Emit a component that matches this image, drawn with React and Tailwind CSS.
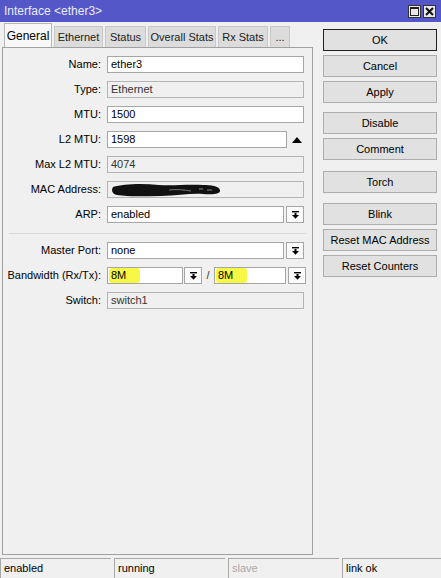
import React from "react";

const tabs = [
  { label: "General", w: "w-[48px]", active: true },
  { label: "Ethernet", w: "w-[49px]" },
  { label: "Status", w: "w-[41px]" },
  { label: "Overall Stats", w: "w-[68px]" },
  { label: "Rx Stats", w: "w-[50px]" },
  { label: "...", w: "w-[20px]" },
];

// right-hand command buttons; mt is the gap above each one
const buttons = [
  { label: "OK", mt: "mt-0", def: true },
  { label: "Cancel", mt: "mt-[4px]" },
  { label: "Apply", mt: "mt-[4px]" },
  { label: "Disable", mt: "mt-[9px]" },
  { label: "Comment", mt: "mt-[4px]" },
  { label: "Torch", mt: "mt-[11px]" },
  { label: "Blink", mt: "mt-[10px]" },
  { label: "Reset MAC Address", mt: "mt-[4px]" },
  { label: "Reset Counters", mt: "mt-[4px]" },
];

function DropGlyph() {
  return (
    <svg width="9" height="8" viewBox="0 0 9 8">
      <rect x="1" y="0" width="7" height="1.4" fill="#000" />
      <rect x="3.5" y="2" width="2" height="2" fill="#000" />
      <path d="M1 4 L8 4 L4.5 7.8 Z" fill="#000" />
    </svg>
  );
}

function DropButton() {
  return (
    <div className="w-[18px] h-[17px] border border-[#a6a6a6] bg-[#fbfbfb] flex items-center justify-center shrink-0">
      <DropGlyph />
    </div>
  );
}

function Field({ value, readOnly, className = "w-[197px]", children }) {
  return (
    <div
      className={`${className} h-[17px] border flex items-center pl-[3px] shrink-0 ${
        readOnly ? "border-[#b4b4b4] bg-[#f0f0f0] text-[#333]" : "border-[#a6a6a6] bg-white"
      }`}
    >
      {children ?? value}
    </div>
  );
}

function Row({ label, children }) {
  return (
    <div className="flex items-center h-[17px]">
      <div className="w-[98px] text-right shrink-0">{label}</div>
      <div className="ml-[6px] flex items-center">{children}</div>
    </div>
  );
}

function Marked({ children }) {
  return (
    <span className="inline-flex items-center w-[31px] h-[15px] -ml-[2px] pl-[2px] bg-[#f7f746] rounded-[3px]">
      {children}
    </span>
  );
}

function Scribble() {
  return (
    <svg width="112" height="16" viewBox="0 0 112 16">
      <path
        d="M2 5 C12 2 30 1 48 3 C62 4 76 2 92 3 C100 3 108 4 109 8 C110 12 102 13 92 12 C80 11 66 14 50 14 C34 14 18 15 6 13 C1 12 0 8 2 5 Z"
        fill="#111"
      />
      <path d="M58 8 C66 7 74 8 80 9" stroke="#777" strokeWidth="1" fill="none" />
      <path d="M88 7 L92 7 M96 8 L101 8" stroke="#888" strokeWidth="1" />
    </svg>
  );
}

export default function App() {
  return (
    <div className="w-[441px] h-[578px] bg-[#f0f0f0] flex flex-col overflow-hidden font-['Liberation_Sans',Arial,sans-serif] text-[11px] text-black leading-none">
      {/* title bar */}
      <div className="h-[22px] bg-[#5357c8] flex items-center justify-between pl-[4px] pr-[5px] shrink-0">
        <span className="text-[12px] text-[#ececf8]">Interface &lt;ether3&gt;</span>
        <div className="flex gap-[2px]">
          <div className="w-[13px] h-[13px] bg-[#e8e8e8] border border-[#333] flex items-center justify-center">
            <div className="w-[9px] h-[9px] border border-[#222] border-t-2" />
          </div>
          <div className="w-[13px] h-[13px] bg-[#e8e8e8] border border-[#333] flex items-center justify-center">
            <svg width="9" height="9" viewBox="0 0 9 9">
              <path d="M1 1 L8 8 M8 1 L1 8" stroke="#111" strokeWidth="2" />
            </svg>
          </div>
        </div>
      </div>

      <div className="flex flex-1 min-h-0">
        {/* left: tabs + form panel */}
        <div className="w-[313px] flex flex-col pl-[2px] pt-[1px] pb-[3px]">
          <div className="h-[24px] flex items-end gap-[2px] pl-[2px] shrink-0">
            {tabs.map((t) => (
              <div
                key={t.label}
                className={`${t.w} flex items-center justify-center border border-b-0 ${
                  t.active
                    ? "h-[24px] bg-[#f7f7f7] border-[#b8b8b8] text-[12px]"
                    : "h-[21px] bg-[#dcdcdc] border-[#c8c8c8] text-[#222]"
                }`}
              >
                {t.label}
              </div>
            ))}
          </div>
          <div className="flex-1 border border-[#a0a0a0] bg-[#f0f0f0] pt-[8px] flex flex-col gap-[8px]">
            <Row label="Name:">
              <Field value="ether3" />
            </Row>
            <Row label="Type:">
              <Field value="Ethernet" readOnly />
            </Row>
            <Row label="MTU:">
              <Field value="1500" />
            </Row>
            <Row label="L2 MTU:">
              <Field value="1598" className="w-[180px]" />
              <div className="w-[18px] flex justify-center ml-[1px]">
                <svg width="10" height="6" viewBox="0 0 10 6">
                  <path d="M5 0 L10 6 L0 6 Z" fill="#000" />
                </svg>
              </div>
            </Row>
            <Row label="Max L2 MTU:">
              <Field value="4074" readOnly />
            </Row>
            <Row label="MAC Address:">
              <Field readOnly>
                <Scribble />
              </Field>
            </Row>
            <Row label="ARP:">
              <Field value="enabled" className="w-[177px]" />
              <div className="ml-[2px]">
                <DropButton />
              </div>
            </Row>

            <div className="h-px bg-[#d9d9d9] mx-[6px] mt-[2px]" />

            <Row label="Master Port:">
              <Field value="none" className="w-[177px]" />
              <div className="ml-[2px]">
                <DropButton />
              </div>
            </Row>
            <Row label="Bandwidth (Rx/Tx):">
              <Field className="w-[76px]">
                <Marked>8M</Marked>
              </Field>
              <div className="ml-[1px]">
                <DropButton />
              </div>
              <span className="w-[12px] text-center text-[#333]">/</span>
              <Field className="w-[72px]">
                <Marked>8M</Marked>
              </Field>
              <div className="ml-[2px]">
                <DropButton />
              </div>
            </Row>
            <Row label="Switch:">
              <Field value="switch1" readOnly />
            </Row>
          </div>
        </div>

        {/* right: command buttons */}
        <div className="flex flex-col pl-[10px] pt-[7px]">
          {buttons.map((b) => (
            <div
              key={b.label}
              className={`${b.mt} w-[114px] h-[22px] flex items-center justify-center bg-[#e1e1e1] border ${
                b.def ? "border-[#222]" : "border-[#adadad]"
              }`}
            >
              {b.label}
            </div>
          ))}
        </div>
      </div>

      {/* status bar */}
      <div className="h-[20px] flex gap-[3px] shrink-0">
        {[
          { t: "enabled", w: "w-[111px]" },
          { t: "running", w: "w-[111px]" },
          { t: "slave", w: "w-[111px]", dim: true },
          { t: "link ok", w: "flex-1" },
        ].map((s) => (
          <div
            key={s.t}
            className={`${s.w} border-t border-l border-[#a8a8a8] flex items-center pl-[3px] ${
              s.dim ? "text-[#a8a8a8]" : ""
            }`}
          >
            {s.t}
          </div>
        ))}
      </div>
    </div>
  );
}
